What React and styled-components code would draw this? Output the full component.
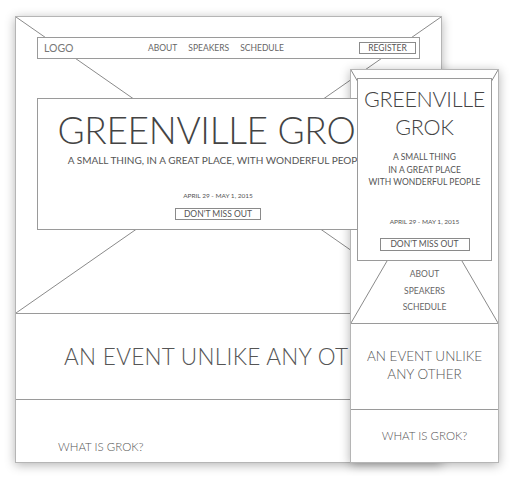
import React from "react";
import styled, { createGlobalStyle } from "styled-components";

const Global = createGlobalStyle`
  html, body { margin: 0; padding: 0; background: #ffffff; }
  body { font-family: "Lato", "Noto Sans", sans-serif; color: #555; }
  * { box-sizing: border-box; }
`;

const Canvas = styled.div`
  position: relative;
  width: 514px;
  height: 479px;
  overflow: hidden;
  background: #fff;
`;

const Frame = styled.div`
  position: absolute;
  left: ${(p) => p.$x}px;
  top: ${(p) => p.$y}px;
  width: ${(p) => p.$w}px;
  height: ${(p) => p.$h}px;
  background: #fff;
  border: 1px solid #b5b5b5;
  box-shadow: 0 2px 10px rgba(0, 0, 0, 0.3);
  display: flex;
  flex-direction: column;
  overflow: hidden;
`;

const Header = styled.div`
  position: relative;
  height: ${(p) => p.$h}px;
  flex: none;
  border-bottom: 1px solid #9a9a9a;
  display: flex;
  flex-direction: column;
  padding: ${(p) => p.$pad};
`;

const CrossSvg = styled.svg`
  position: absolute;
  inset: 0;
  width: 100%;
  height: 100%;
  z-index: 0;
`;

const Cross = () => (
  <CrossSvg viewBox="0 0 100 100" preserveAspectRatio="none">
    <line x1="0" y1="0" x2="100" y2="100" stroke="#8a8a8a" strokeWidth="1" vectorEffect="non-scaling-stroke" />
    <line x1="100" y1="0" x2="0" y2="100" stroke="#8a8a8a" strokeWidth="1" vectorEffect="non-scaling-stroke" />
  </CrossSvg>
);

const NavBar = styled.div`
  position: relative;
  z-index: 1;
  height: 22px;
  background: #fff;
  border: 1px solid #9a9a9a;
  display: flex;
  align-items: center;
  padding: 0 3px 0 6px;
  font-size: 9px;
  color: #666;
`;

const Logo = styled.span`
  font-size: 10.5px;
  color: #777;
  width: 104px;
`;

const NavLinks = styled.div`
  display: flex;
  gap: 11px;
  flex: 1;
`;

const NavLink = styled.span`
  font-size: 8.5px;
  color: #666;
`;

const OutlineButton = styled.span`
  display: inline-flex;
  align-items: center;
  justify-content: center;
  height: ${(p) => p.$h}px;
  width: ${(p) => p.$w}px;
  border: 1px solid #8a8a8a;
  font-size: ${(p) => p.$fs}px;
  color: #555;
  background: #fff;
  white-space: nowrap;
`;

const Hero = styled.div`
  position: relative;
  z-index: 1;
  background: #fff;
  border: 1px solid #9a9a9a;
  display: flex;
  flex-direction: column;
  align-items: center;
  text-align: center;
  height: ${(p) => p.$h}px;
  margin: ${(p) => p.$m};
  padding-top: ${(p) => p.$pt}px;
  white-space: nowrap;
`;

const Title = styled.div`
  font-weight: 300;
  color: #444;
  font-size: ${(p) => p.$fs}px;
  line-height: ${(p) => p.$lh}px;
  letter-spacing: ${(p) => p.$ls || 0}px;
`;

const Tagline = styled.div`
  font-size: ${(p) => p.$fs}px;
  line-height: ${(p) => p.$lh}px;
  margin-top: ${(p) => p.$mt}px;
  color: #555;
`;

const DateLine = styled.div`
  font-size: ${(p) => p.$fs}px;
  line-height: 10px;
  margin-top: ${(p) => p.$mt}px;
  margin-bottom: ${(p) => p.$mb}px;
  color: #555;
`;

const MobileNav = styled.div`
  position: relative;
  z-index: 1;
  display: flex;
  flex-direction: column;
  align-items: center;
  margin-top: 5px;
`;

const MobileNavLink = styled.span`
  font-size: 8.5px;
  line-height: 16.5px;
  color: #666;
`;

const Section = styled.div`
  flex: none;
  height: ${(p) => p.$h || "auto"};
  border-bottom: ${(p) => (p.$line ? "1px solid #9a9a9a" : "none")};
  display: flex;
  flex-direction: column;
  align-items: ${(p) => (p.$left ? "flex-start" : "center")};
  justify-content: ${(p) => (p.$top ? "flex-start" : "center")};
  padding: ${(p) => p.$pad || 0};
  text-align: center;
  white-space: nowrap;
`;

const Headline = styled.div`
  font-size: ${(p) => p.$fs}px;
  line-height: ${(p) => p.$lh}px;
  letter-spacing: ${(p) => p.$ls || 0}px;
  color: #555;
  font-weight: 300;
`;

const SubHead = styled.div`
  font-size: 11.5px;
  color: #555;
  font-weight: 300;
`;

export default function App() {
  return (
    <>
      <Global />
      <Canvas>
        <Frame $x={15} $y={16} $w={427} $h={447}>
          <Header $h={297} $pad="20px 21px 0 21px">
            <Cross />
            <NavBar>
              <Logo>LOGO</Logo>
              <NavLinks>
                <NavLink>ABOUT</NavLink>
                <NavLink>SPEAKERS</NavLink>
                <NavLink>SCHEDULE</NavLink>
              </NavLinks>
              <OutlineButton $w={57} $h={12} $fs={8.5}>REGISTER</OutlineButton>
            </NavBar>
            <Hero $h={132} $m="39px 21px 0 0" $pt={11}>
              <Title $fs={37} $lh={40} $ls={-0.3}>GREENVILLE GROK</Title>
              <Tagline $fs={10} $lh={14} $mt={3}>A SMALL THING, IN A GREAT PLACE, WITH WONDERFUL PEOPLE</Tagline>
              <DateLine $fs={6.5} $mt={24} $mb={7}>APRIL 29 - MAY 1, 2015</DateLine>
              <OutlineButton $w={86} $h={12} $fs={8.5}>DON'T MISS OUT</OutlineButton>
            </Hero>
          </Header>
          <Section $h="86px" $line>
            <Headline $fs={22.5} $lh={26} $ls={0.3}>AN EVENT UNLIKE ANY OTHER</Headline>
          </Section>
          <Section $left $pad="40px 0 0 42px">
            <SubHead>WHAT IS GROK?</SubHead>
          </Section>
        </Frame>

        <Frame $x={350} $y={69} $w={149} $h={394}>
          <Header $h={254} $pad="8px 6px 0 6px">
            <Cross />
            <Hero $h={183} $m="0" $pt={6}>
              <Title $fs={21.5} $lh={28} $ls={-0.3}>
                GREENVILLE
                <br />
                GROK
              </Title>
              <Tagline $fs={8.5} $lh={12.5} $mt={10}>
                A SMALL THING
                <br />
                IN A GREAT PLACE
                <br />
                WITH WONDERFUL PEOPLE
              </Tagline>
              <DateLine $fs={6.5} $mt={28} $mb={11}>APRIL 29 - MAY 1, 2015</DateLine>
              <OutlineButton $w={90} $h={13} $fs={8.5}>DON'T MISS OUT</OutlineButton>
            </Hero>
            <MobileNav>
              <MobileNavLink>ABOUT</MobileNavLink>
              <MobileNavLink>SPEAKERS</MobileNavLink>
              <MobileNavLink>SCHEDULE</MobileNavLink>
            </MobileNav>
          </Header>
          <Section $h="86px" $line $top $pad="23px 0 0 0">
            <Headline $fs={13.5} $lh={18}>
              AN EVENT UNLIKE
              <br />
              ANY OTHER
            </Headline>
          </Section>
          <Section $top $pad="19px 0 0 0">
            <SubHead>WHAT IS GROK?</SubHead>
          </Section>
        </Frame>
      </Canvas>
    </>
  );
}
